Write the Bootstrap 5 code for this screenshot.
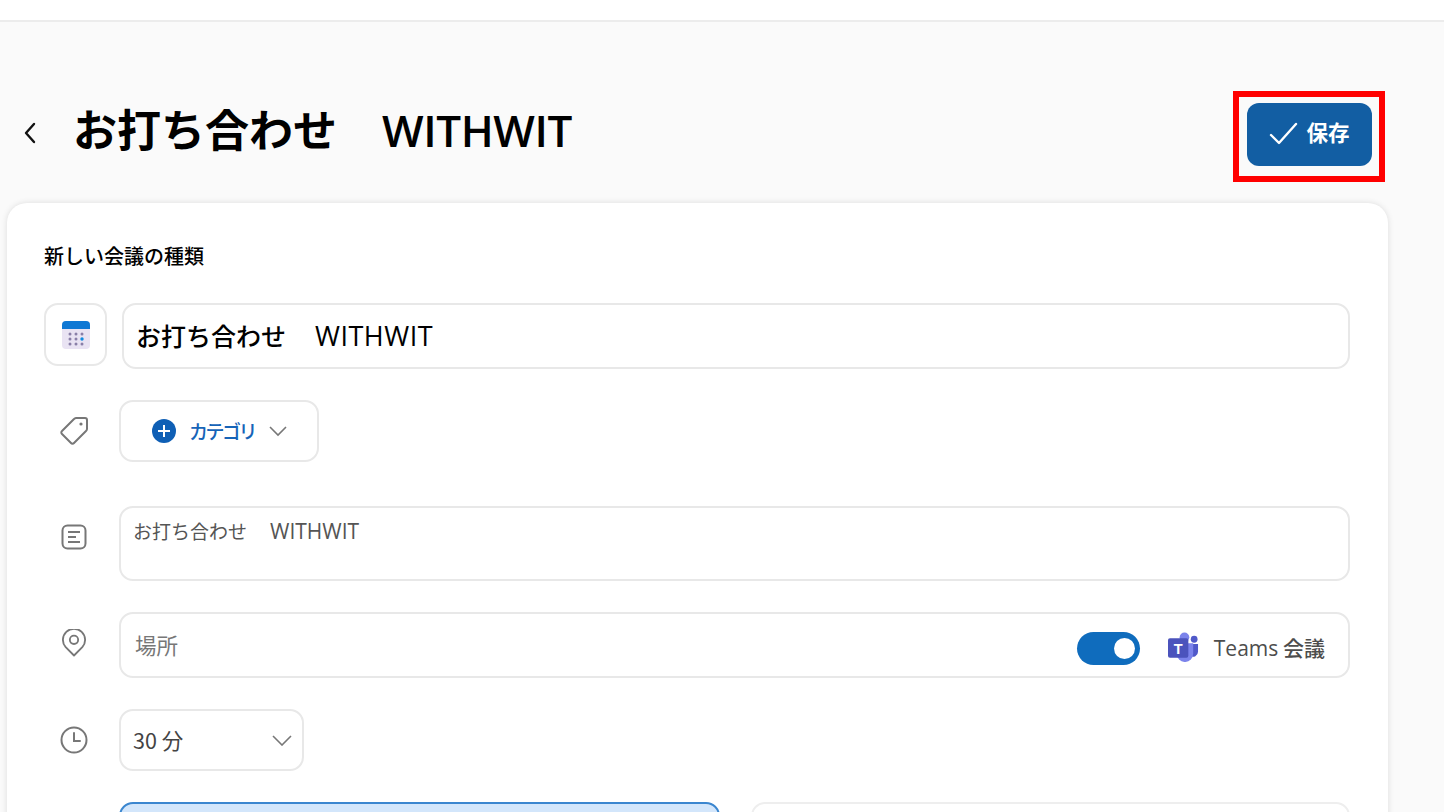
<!DOCTYPE html>
<html lang="ja">
<head>
<meta charset="utf-8">
<link href="https://cdn.jsdelivr.net/npm/bootstrap@5.3.0/dist/css/bootstrap.min.css" rel="stylesheet">
<style>
html,body{height:812px;overflow:hidden}
body{background:#fafafa;font-family:"Noto Sans CJK JP","Open Sans",sans-serif;color:#000}
.wf{font-family:"Open Sans","Noto Sans CJK JP",sans-serif}
.topbar{height:22px;background:#fff;border-bottom:2px solid #ececec}
.headrow{height:181px;padding:33px 59px 0 22px}
.backbtn{width:16px;margin-right:35px;margin-top:8px}
.pagetitle{font-size:44px;font-weight:700;line-height:60px;margin:0}
.pagesub{font-size:44px;font-weight:600;margin-left:45px;letter-spacing:-.4px}
.savewrap{border:6px solid #f00;width:152px;height:91px;margin-top:15px}
.savebtn{width:125px;height:63px;background:#125ea3;border-radius:12px;border:0;color:#fff;font-weight:700;font-size:21.5px;gap:7px;margin:0 0 5px 1px;padding:0 0 3px 0}
.panel{margin:0 56px 0 7px;height:640px;background:#fff;border-radius:20px;box-shadow:0 0 6px rgba(0,0,0,.12);padding:38px 38px 0 37px}
.paneltitle{font-size:20px;font-weight:500;line-height:30px;margin-bottom:32px}
.fieldbox{background:#fff;border:2px solid #e8e8e8;border-radius:14px}
.iconbox{width:63px;height:63px;margin-right:15px}
.namebox{height:66px;flex:1;padding:0 12px;font-size:25px;font-weight:500}
.namelatin{font-size:27px;font-weight:500;margin-left:29px;letter-spacing:.5px}
.rowicon{width:60px;margin-right:15px}
.rowicon-up{padding-bottom:13px}
.rowicon-up-sm{padding-bottom:4px}
.catbox{width:200px;height:62px;gap:13px;color:#1664b8;font-size:19px;font-weight:500;letter-spacing:-2.5px;padding-left:2px}
.descbox{flex:1;height:75px;padding:6px 12px;font-size:19px;color:#555;line-height:34px}
.desclatin{font-size:21px;margin-left:23px}
.locbox{flex:1;height:66px;padding:0 23px 0 14px;font-size:21.5px;color:#777}
.togglepill{width:63px;height:33px;border-radius:17px;background:#0f6cbd;padding:0 5px;margin:6px 28px 0 0}
.toggledot{width:21px;height:21px;border-radius:50%;background:#fff}
.teamsicon{margin-top:3px}
.teamstext{font-size:21px;font-weight:500;color:#4d4d4d;margin:6px 0 0 15px}
.durbox{width:185px;height:62px;padding:0 10px 0 12px;font-size:21.5px;color:#444}
.gap-a,.gap-c{margin-top:31px}.gap-b{margin-top:44px}
.dateholder{margin:31px 0 0 75px;gap:31px}
.datea{height:60px;width:601px;background:#d3e6fb;border:2px solid #3b86cf;border-radius:14px}
.dateb{height:60px;width:600px;background:#fff;border:2px solid #eee;border-radius:14px}
</style>
</head>
<body>
<div class="topbar"></div>
<div class="headrow d-flex align-items-center">
  <svg class="backbtn" width="16" height="26" viewBox="0 0 16 26" fill="none" stroke="#111" stroke-width="2.4" stroke-linecap="round" stroke-linejoin="round"><path d="M12 4 4 13l8 9"/></svg>
  <h1 class="pagetitle flex-grow-1">お打ち合わせ<span class="pagesub wf">WITHWIT</span></h1>
  <div class="savewrap d-flex align-items-center justify-content-center">
    <button type="button" class="savebtn btn d-flex align-items-center justify-content-center">
      <svg width="30" height="24" viewBox="0 0 30 24" fill="none" stroke="#fff" stroke-width="2.4" stroke-linecap="round" stroke-linejoin="round"><path d="M2 14l8 8L27 3"/></svg>
      <span>保存</span>
    </button>
  </div>
</div>
<div class="panel">
  <div class="paneltitle">新しい会議の種類</div>
  <div class="d-flex align-items-start">
    <div class="fieldbox iconbox d-flex align-items-center justify-content-center">
      <svg width="30" height="30" viewBox="0 0 30 30"><rect x="1" y="1" width="28" height="28" rx="4" fill="#e9e3f3"/><path d="M1 9V5a4 4 0 0 1 4-4h20a4 4 0 0 1 4 4v4z" fill="#0f78d4"/><g fill="#8a7fa8"><circle cx="9" cy="14" r="1.5"/><circle cx="15" cy="14" r="1.5"/><circle cx="21" cy="14" r="1.5"/><circle cx="9" cy="19" r="1.5"/><circle cx="15" cy="19" r="1.5"/><circle cx="9" cy="24" r="1.5"/><circle cx="15" cy="24" r="1.5"/><circle cx="21" cy="24" r="1.5"/></g><circle cx="21" cy="19" r="1.7" fill="#0f8ae0"/></svg>
    </div>
    <div class="fieldbox namebox d-flex align-items-center"><span>お打ち合わせ</span><span class="wf namelatin">WITHWIT</span></div>
  </div>
  <div class="d-flex align-items-center gap-a">
    <div class="rowicon d-flex justify-content-center">
      <svg width="30" height="30" viewBox="0 0 30 30" fill="none" stroke="#777" stroke-width="2" stroke-linejoin="round"><path d="M17 2h9a2 2 0 0 1 2 2v9a3 3 0 0 1-1 2L15 27a2 2 0 0 1-3 0L3 18a2 2 0 0 1 0-3L15 3a3 3 0 0 1 2-1z"/><circle cx="22" cy="8" r="1.6" fill="#777" stroke="none"/></svg>
    </div>
    <div class="fieldbox catbox d-flex align-items-center justify-content-center">
      <svg width="24" height="24" viewBox="0 0 24 24"><circle cx="12" cy="12" r="12" fill="#0f5fb5"/><path d="M12 6v12M6 12h12" stroke="#fff" stroke-width="2"/></svg>
      <span>カテゴリ</span>
      <svg width="20" height="12" viewBox="0 0 20 12" fill="none" stroke="#777" stroke-width="1.6"><path d="M2 2l8 8 8-8"/></svg>
    </div>
  </div>
  <div class="d-flex align-items-center gap-b">
    <div class="rowicon rowicon-up d-flex justify-content-center">
      <svg width="26" height="26" viewBox="0 0 26 26" fill="none" stroke="#777" stroke-width="2"><rect x="1.5" y="1.5" width="23" height="23" rx="5"/><path d="M7 8h12M7 13h8M7 18h12"/></svg>
    </div>
    <div class="fieldbox descbox"><span>お打ち合わせ</span><span class="wf desclatin">WITHWIT</span></div>
  </div>
  <div class="d-flex align-items-center gap-c">
    <div class="rowicon rowicon-up-sm d-flex justify-content-center">
      <svg width="24" height="29" viewBox="0 0 26 30" fill="none" stroke="#777" stroke-width="2"><path d="M13 28 4 19a12 12 0 1 1 18 0z" stroke-linejoin="round"/><circle cx="13" cy="11" r="4.5"/></svg>
    </div>
    <div class="fieldbox locbox d-flex align-items-center">
      <span class="flex-grow-1">場所</span>
      <div class="togglepill d-flex align-items-center justify-content-end"><div class="toggledot"></div></div>
      <svg class="teamsicon" width="31" height="30" viewBox="0 0 32 30"><circle cx="17" cy="5" r="5" fill="#7b83eb"/><circle cx="27" cy="7" r="3.5" fill="#5059c9"/><path d="M23 12h8v8a5 5 0 0 1-8 4z" fill="#5059c9"/><path d="M9 11h17v11a8 8 0 0 1-17 0z" fill="#7b83eb"/><rect x="0" y="6" width="21" height="20" rx="2" fill="#4b53bc"/><text x="10.5" y="22" font-size="15" font-weight="700" fill="#fff" text-anchor="middle" font-family="Liberation Sans">T</text></svg>
      <span class="teamstext"><span class="wf">Teams</span> 会議</span>
    </div>
  </div>
  <div class="d-flex align-items-center gap-c">
    <div class="rowicon d-flex justify-content-center">
      <svg width="28" height="28" viewBox="0 0 28 28" fill="none" stroke="#777" stroke-width="2" stroke-linecap="round"><circle cx="14" cy="14" r="12.5"/><path d="M14 7v8h6"/></svg>
    </div>
    <div class="fieldbox durbox d-flex align-items-center">
      <span class="flex-grow-1">30 分</span>
      <svg width="20" height="12" viewBox="0 0 20 12" fill="none" stroke="#777" stroke-width="1.6"><path d="M1 2l9 9 9-9"/></svg>
    </div>
  </div>
  <div class="dateholder d-flex">
    <div class="datea"></div>
    <div class="dateb"></div>
  </div>
</div>
<script src="https://cdn.jsdelivr.net/npm/bootstrap@5.3.0/dist/js/bootstrap.bundle.min.js"></script>
</body>
</html>
